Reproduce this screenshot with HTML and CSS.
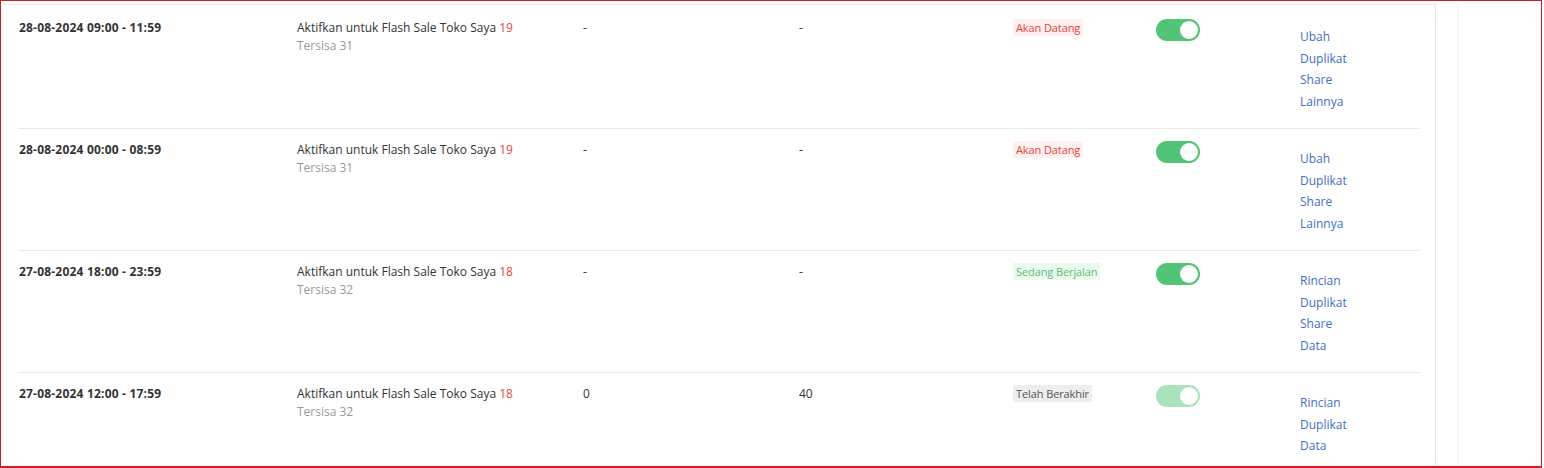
FILE: index.html
```html
<!DOCTYPE html>
<html lang="id">
<head>
<meta charset="utf-8">
<title>Flash Sale Toko Saya</title>
<link rel="stylesheet" href="styles.css">
</head>
<body>
<div class="frame">
  <div class="panel">
    <div class="row">
      <div class="cell date">28-08-2024 09:00 - 11:59</div>
      <div class="cell product"><div>Aktifkan untuk Flash Sale Toko Saya <span class="num">19</span></div><div class="sub">Tersisa 31</div></div>
      <div class="cell">-</div>
      <div class="cell">-</div>
      <div class="cell"><span class="badge upcoming">Akan Datang</span></div>
      <div class="cell"><span class="toggle"></span></div>
      <div class="cell actions"><a>Ubah</a><a>Duplikat</a><a>Share</a><a>Lainnya</a></div>
    </div>
    <div class="row">
      <div class="cell date">28-08-2024 00:00 - 08:59</div>
      <div class="cell product"><div>Aktifkan untuk Flash Sale Toko Saya <span class="num">19</span></div><div class="sub">Tersisa 31</div></div>
      <div class="cell">-</div>
      <div class="cell">-</div>
      <div class="cell"><span class="badge upcoming">Akan Datang</span></div>
      <div class="cell"><span class="toggle"></span></div>
      <div class="cell actions"><a>Ubah</a><a>Duplikat</a><a>Share</a><a>Lainnya</a></div>
    </div>
    <div class="row">
      <div class="cell date">27-08-2024 18:00 - 23:59</div>
      <div class="cell product"><div>Aktifkan untuk Flash Sale Toko Saya <span class="num">18</span></div><div class="sub">Tersisa 32</div></div>
      <div class="cell">-</div>
      <div class="cell">-</div>
      <div class="cell"><span class="badge ongoing">Sedang Berjalan</span></div>
      <div class="cell"><span class="toggle"></span></div>
      <div class="cell actions"><a>Rincian</a><a>Duplikat</a><a>Share</a><a>Data</a></div>
    </div>
    <div class="row">
      <div class="cell date">27-08-2024 12:00 - 17:59</div>
      <div class="cell product"><div>Aktifkan untuk Flash Sale Toko Saya <span class="num">18</span></div><div class="sub">Tersisa 32</div></div>
      <div class="cell">0</div>
      <div class="cell">40</div>
      <div class="cell"><span class="badge ended">Telah Berakhir</span></div>
      <div class="cell"><span class="toggle disabled"></span></div>
      <div class="cell actions"><a>Rincian</a><a>Duplikat</a><a>Data</a></div>
    </div>
  </div>
  <div class="side"><div class="side-line"></div></div>
</div>
</body>
</html>
```
FILE: styles.css
```css
html, body {
  margin: 0;
  padding: 0;
  background: #fff;
}
body {
  font-family: "Open Sans", "Noto Sans", sans-serif;
  font-size: 12px;
  color: #333;
  overflow: hidden;
}
.frame {
  box-sizing: border-box;
  width: 1542px;
  height: 468px;
  border: 1px solid #cc1f1f;
  border-bottom-width: 2px;
  padding: 3px 0 0 3px;
  display: flex;
  overflow: hidden;
}
.panel {
  box-sizing: border-box;
  width: 1432px;
  flex: none;
  border-top: 1px solid #ececec;
  border-right: 1px solid #e3e3e3;
  padding: 2px 15px 0 14px;
}
.row {
  box-sizing: border-box;
  display: grid;
  grid-template-columns: 278px 286px 216px 214px 143px 144px 1fr;
  height: 122px;
  border-bottom: 1px solid #e8e8e8;
  padding-left: 1px;
}
.cell {
  padding-top: 12px;
  line-height: 18px;
}
.date {
  font-weight: 700;
  letter-spacing: 0.2px;
}
.num {
  color: #e0463d;
}
.sub {
  color: #999;
}
.badge {
  display: inline-block;
  font-size: 11px;
  line-height: 17px;
  padding: 0 3px;
  letter-spacing: -0.1px;
}
.upcoming {
  color: #e5433b;
  background: #fff0f0;
}
.ongoing {
  color: #5bbf78;
  background: #ebfaee;
}
.ended {
  color: #555;
  background: #eeeeee;
}
.toggle {
  display: block;
  position: relative;
  width: 44px;
  height: 22px;
  border-radius: 11px;
  background: #52c478;
}
.toggle::after {
  content: "";
  position: absolute;
  right: 2px;
  top: 2px;
  width: 18px;
  height: 18px;
  border-radius: 50%;
  background: #fff;
}
.toggle.disabled {
  background: #a8e3bc;
}
.actions {
  display: flex;
  flex-direction: column;
  padding-top: 19px;
}
.actions a {
  color: #3f6fc6;
  line-height: 21.7px;
  cursor: pointer;
}
.side {
  flex: 1;
  display: flex;
}
.side-line {
  margin-left: 21px;
  width: 1px;
  background: linear-gradient(to right, #f2f2f2, #f7f7f7);
  box-shadow: 1px 0 2px #f6f6f6;
}
```
